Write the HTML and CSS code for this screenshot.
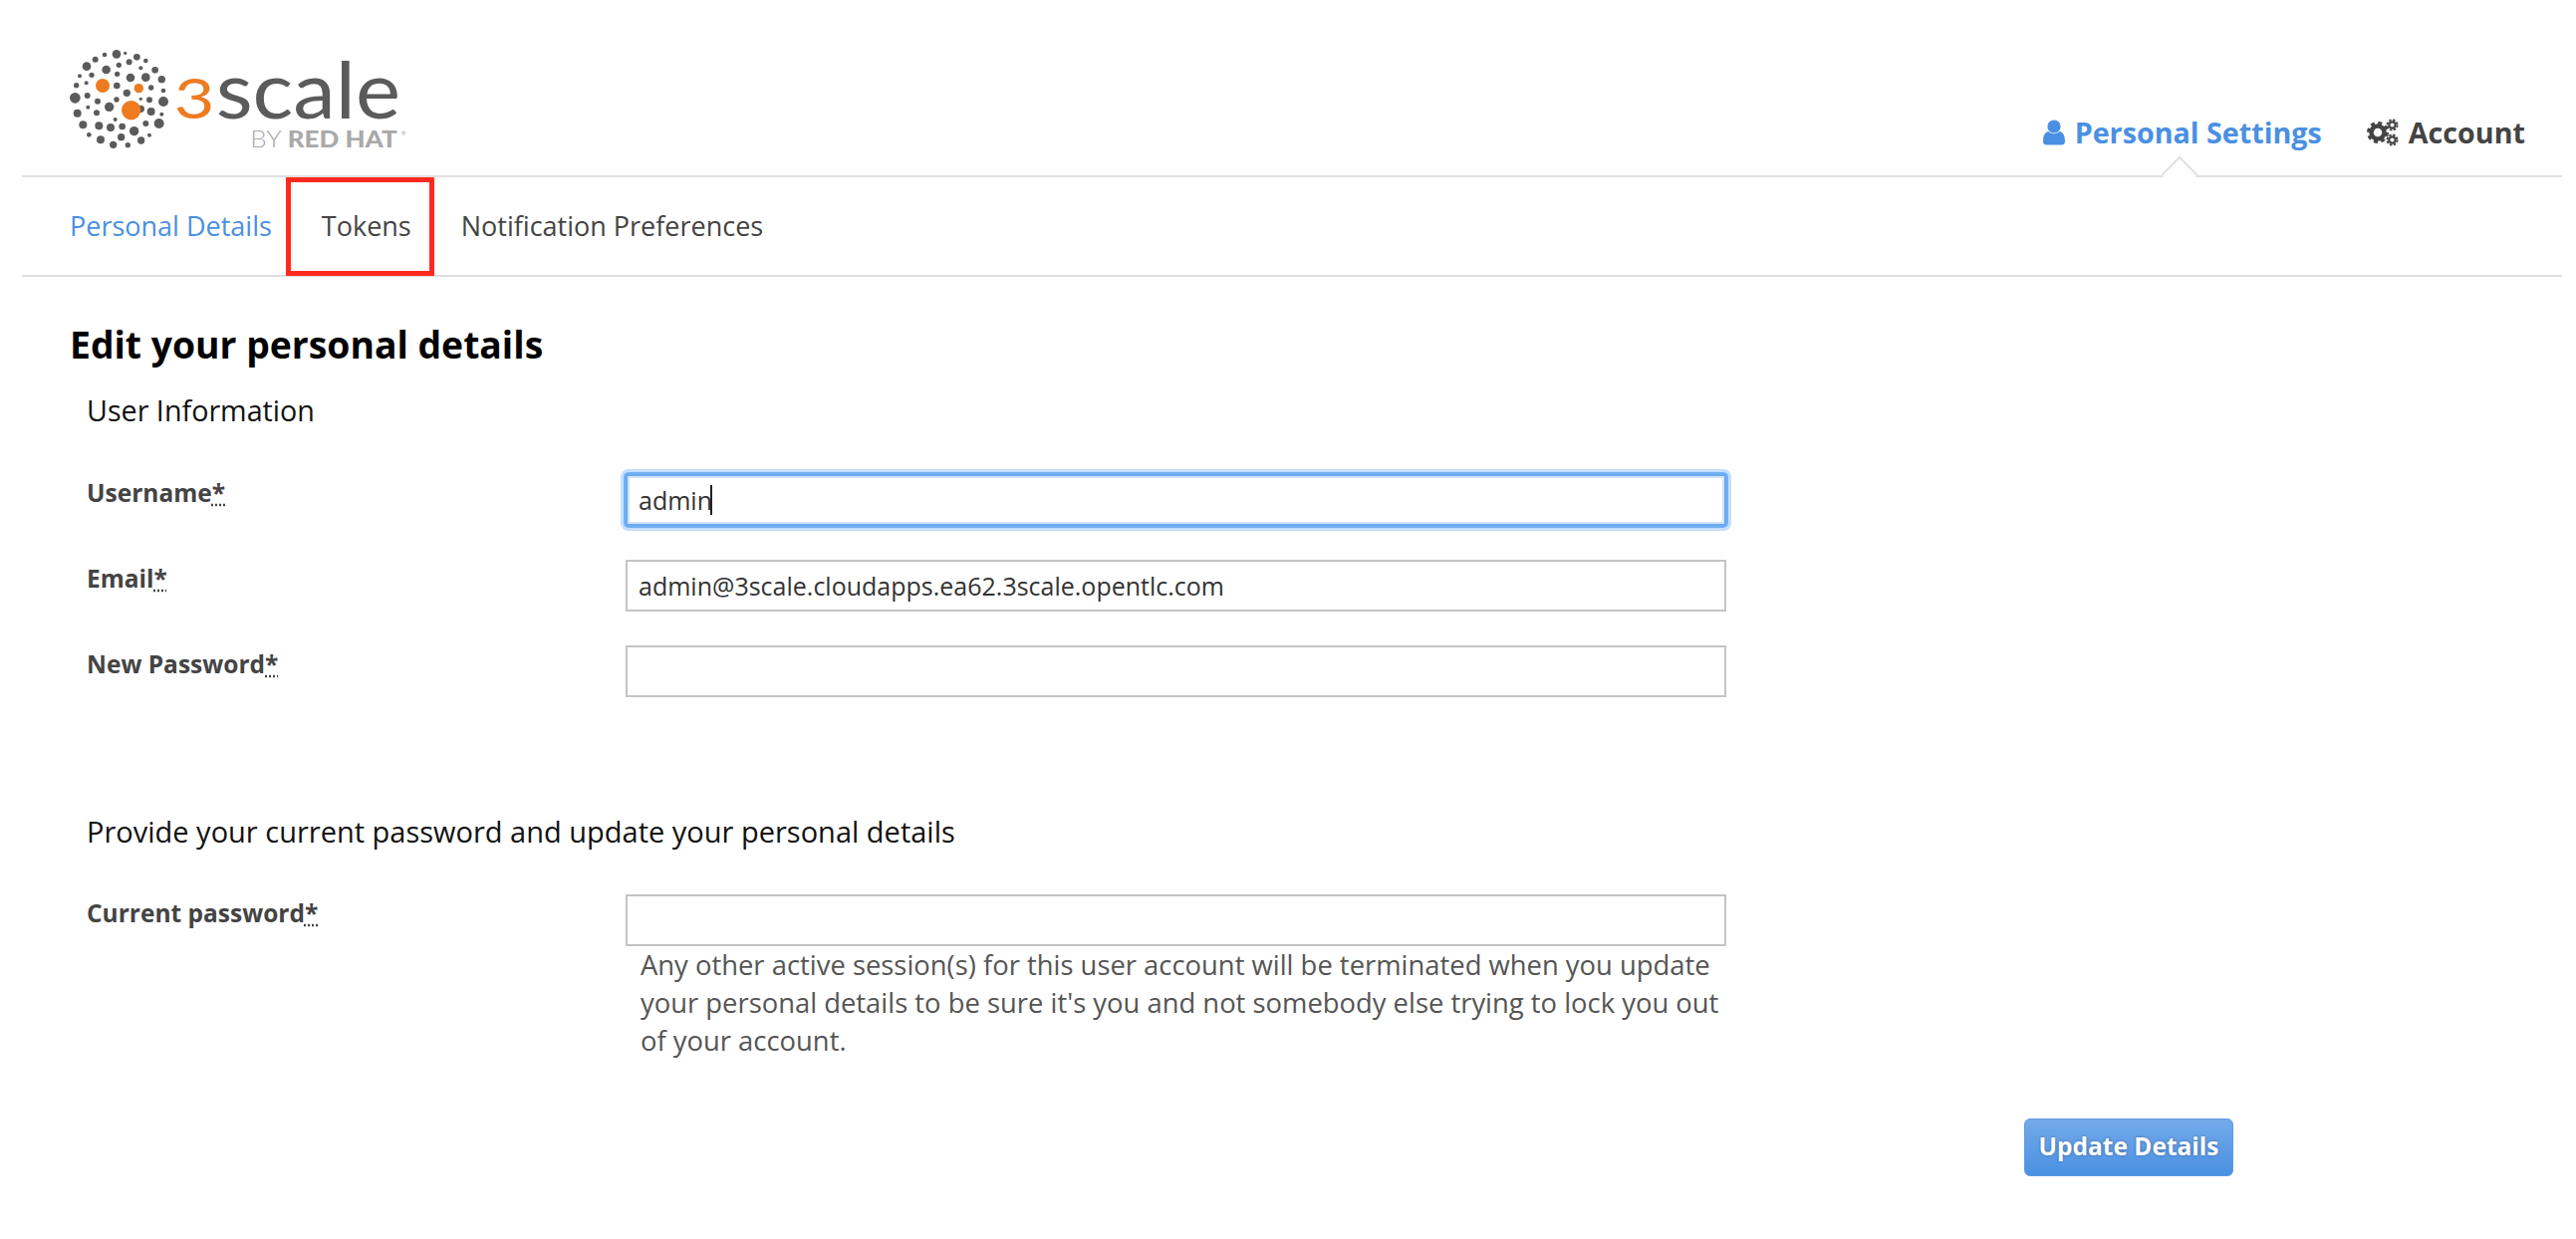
FILE: index.html
```html
<!DOCTYPE html>
<html lang="en">
<head>
    <meta charset="UTF-8">
    <title>Personal Details</title>
    <link rel="stylesheet" href="styles.css">
</head>
<body>
<div class="page">
    <header class="top">
        <a class="logo" href="#">
            <svg width="400" height="140" viewBox="0 0 1200 420">
                <g fill="#5b5b5b">
                    <circle cx="231" cy="73" r="13"/><circle cx="257" cy="70" r="5"/><circle cx="195" cy="75" r="7"/><circle cx="292" cy="82" r="10"/><circle cx="319" cy="93" r="7"/><circle cx="167" cy="89" r="9"/><circle cx="269" cy="97" r="9"/><circle cx="238" cy="106" r="8"/><circle cx="141" cy="110" r="13"/><circle cx="304" cy="115" r="6"/><circle cx="200" cy="120" r="13"/><circle cx="347" cy="121" r="10"/><circle cx="233" cy="133" r="8"/><circle cx="156" cy="136" r="8"/><circle cx="120" cy="139" r="6"/><circle cx="273" cy="144" r="13"/><circle cx="319" cy="143" r="13"/><circle cx="367" cy="149" r="11"/><circle cx="140" cy="160" r="6"/><circle cx="110" cy="167" r="8"/><circle cx="232" cy="168" r="10"/><circle cx="335" cy="174" r="8"/><circle cx="372" cy="183" r="7"/><circle cx="262" cy="190" r="11"/><circle cx="143" cy="198" r="9"/><circle cx="106" cy="205" r="16"/><circle cx="304" cy="208" r="5"/><circle cx="330" cy="211" r="9"/><circle cx="372" cy="216" r="15"/><circle cx="174" cy="215" r="9"/><circle cx="231" cy="210" r="8"/><circle cx="209" cy="232" r="14"/><circle cx="145" cy="233" r="6"/><circle cx="304" cy="238" r="11"/><circle cx="335" cy="246" r="12"/><circle cx="113" cy="251" r="12"/><circle cx="171" cy="250" r="9"/><circle cx="367" cy="254" r="6"/><circle cx="227" cy="270" r="6"/><circle cx="319" cy="282" r="9"/><circle cx="359" cy="282" r="15"/><circle cx="130" cy="286" r="12"/><circle cx="178" cy="289" r="12"/><circle cx="213" cy="294" r="12"/><circle cx="248" cy="291" r="10"/><circle cx="284" cy="305" r="14"/><circle cx="148" cy="316" r="7"/><circle cx="330" cy="317" r="6"/><circle cx="245" cy="323" r="11"/><circle cx="183" cy="331" r="12"/><circle cx="305" cy="333" r="11"/><circle cx="265" cy="347" r="8"/><circle cx="221" cy="346" r="11"/>
                </g>
                <g fill="#ee7b20">
                    <circle cx="189" cy="168" r="21"/><circle cx="298" cy="176" r="14"/><circle cx="275" cy="242" r="29"/>
                </g>
                <text class="logo-three" x="404" y="268" textLength="122" lengthAdjust="spacingAndGlyphs">3</text>
                <text class="logo-name" x="530" y="268" textLength="556" lengthAdjust="spacingAndGlyphs">scale</text>
                <text class="logo-by" x="634" y="355" textLength="442" lengthAdjust="spacingAndGlyphs">BY <tspan class="logo-rh">RED HAT</tspan></text>
                <text class="logo-reg" x="1088" y="318">®</text>
            </svg>
        </a>
        <nav class="main-nav">
            <a class="main-link active" href="#">
                <svg class="icon-user" width="22" height="26" viewBox="0 0 22 26">
                    <circle cx="11" cy="7" r="6.6" fill="#4a90e2"/>
                    <path d="M0 22C0 16 2 12.5 5.500 12C7 13.500 9 14.200 11 14.200C13 14.200 15 13.500 16.500 12C20 12.500 22 16 22 22C22 24.500 20.500 25.500 18.500 25.500H3.500C1.500 25.500 0 24.500 0 22Z" fill="#4a90e2"/>
                </svg>
                Personal Settings
            </a>
            <a class="main-link" href="#">
                <svg class="icon-cogs" width="32" height="28" viewBox="0 0 32 28" fill="none" stroke="#444">
                    <circle cx="11" cy="14" r="6.500" stroke-width="4.500"/>
                    <circle cx="11" cy="14" r="9.500" stroke-width="3" stroke-dasharray="4 3.460"/>
                    <circle cx="25.500" cy="6.500" r="3.200" stroke-width="2.200"/>
                    <circle cx="25.500" cy="6.500" r="5" stroke-width="2" stroke-dasharray="2.400 1.530"/>
                    <circle cx="25.500" cy="21.500" r="3.200" stroke-width="2.200"/>
                    <circle cx="25.500" cy="21.500" r="5" stroke-width="2" stroke-dasharray="2.400 1.530"/>
                </svg>
                Account
            </a>
        </nav>
    </header>

    <nav class="sub-nav">
        <a class="sub-link active" href="#">Personal Details</a>
        <a class="sub-link marked" href="#">Tokens</a>
        <a class="sub-link" href="#">Notification Preferences</a>
    </nav>

    <main class="content">
        <h1>Edit your personal details</h1>
        <form class="details-form">
            <fieldset class="group">
                <legend>User Information</legend>
                <div class="row">
                    <label for="username">Username<abbr title="required">*</abbr></label>
                    <div class="field">
                        <input type="text" id="username" class="focused" value="admin">
                        <span class="caret"></span>
                    </div>
                </div>
                <div class="row">
                    <label for="email">Email<abbr title="required">*</abbr></label>
                    <input type="text" id="email" value="admin@3scale.cloudapps.ea62.3scale.opentlc.com">
                </div>
                <div class="row">
                    <label for="password">New Password<abbr title="required">*</abbr></label>
                    <input type="password" id="password">
                </div>
            </fieldset>
            <fieldset class="group second">
                <legend>Provide your current password and update your personal details</legend>
                <div class="row">
                    <label for="current">Current password<abbr title="required">*</abbr></label>
                    <div>
                        <input type="password" id="current">
                        <p class="hint">Any other active session(s) for this user account will be terminated when you update your personal details to be sure it's you and not somebody else trying to lock you out of your account.</p>
                    </div>
                </div>
            </fieldset>
            <div class="actions">
                <button type="button" class="update-btn">Update Details</button>
            </div>
        </form>
    </main>
</div>
</body>
</html>
```

FILE: styles.css
```css
html, body {
    margin: 0;
    padding: 0;
    background-color: #fff;
}

body {
    font-family: "Open Sans", "DejaVu Sans", sans-serif;
    color: #444;
    font-size: 27px;
}

a {
    text-decoration: none;
    color: inherit;
}

.page {
    margin: 0 14px 0 22px;
}

/* header */
.top {
    display: flex;
    justify-content: space-between;
    align-items: flex-end;
    height: 176px;
    border-bottom: 2px solid #e0e0e0;
    position: relative;
}

.logo {
    display: block;
    margin: 30px 0 6px 18px;
    align-self: flex-start;
    height: 140px;
}

.logo text {
    font-family: "Lato", sans-serif;
}

.logo-three {
    font-size: 166px;
    font-weight: 400;
    fill: #ee7b20;
}

.logo-name {
    font-size: 236px;
    font-weight: 400;
    fill: #5b5b5b;
}

.logo-by {
    font-size: 70px;
    font-weight: 300;
    fill: #a9a9a9;
}

.logo-rh {
    font-weight: 900;
}

.logo-reg {
    font-size: 18px;
    fill: #a9a9a9;
}

.main-nav {
    display: flex;
    gap: 45px;
    padding: 0 37px 25px 0;
}

.main-link {
    display: flex;
    align-items: center;
    gap: 10px;
    font-size: 28.7px;
    font-weight: 700;
    line-height: 36px;
    color: #444;
}

.main-link.active {
    color: #4a90e2;
    position: relative;
}

/* little caret on the line under the active item */
.main-link.active::after {
    content: "";
    position: absolute;
    left: 124px;
    bottom: -37px;
    width: 26px;
    height: 26px;
    background: #fff;
    border-left: 2px solid #e0e0e0;
    border-top: 2px solid #e0e0e0;
    transform: rotate(45deg);
    box-sizing: border-box;
}

/* sub navigation */
.sub-nav {
    display: flex;
    align-items: center;
    height: 98px;
    border-bottom: 2px solid #e0e0e0;
    padding-left: 48px;
    gap: 50px;
}

.sub-link {
    color: #444;
    font-size: 27px;
    line-height: 36px;
    position: relative;
}

.sub-link.active {
    color: #4a90e2;
}

/* red box marked over the tab */
.sub-link.marked::after {
    content: "";
    position: absolute;
    left: -36px;
    right: -23px;
    top: -31px;
    height: 99px;
    border: 5px solid #ff2a1f;
    box-sizing: border-box;
}

/* form */
.content {
    padding: 0 0 0 48px;
}

h1 {
    margin: 0;
    padding-top: 44px;
    font-size: 37.3px;
    line-height: 48px;
    font-weight: 700;
    color: #000;
}

.group {
    border: 0;
    margin: 0;
    padding: 0 0 0 17px;
}

.group legend {
    float: left;
    width: 100%;
    padding: 0;
    margin: 23px 0 45px;
    font-size: 28.7px;
    line-height: 38px;
    color: #111;
}

.group.second {
    margin-top: 82px;
}

.group.second legend {
    margin: 0 0 44px;
    font-size: 29px;
}

.row {
    clear: both;
    display: grid;
    grid-template-columns: 541px 1105px;
    margin-bottom: 34px;
}

.row label {
    font-size: 24.5px;
    font-weight: 700;
    line-height: 34px;
    padding-top: 2px;
}

abbr {
    text-decoration: underline dotted;
}

.field {
    position: relative;
}

input {
    display: block;
    width: 100%;
    height: 52px;
    box-sizing: border-box;
    padding: 0 11px;
    border: 2px solid #c4c4c4;
    border-radius: 0;
    background: #fff;
    font-family: inherit;
    font-size: 25px;
    color: #333;
    outline: none;
}

input.focused {
    border-color: #6aa9ee;
    border-radius: 3px;
    box-shadow: inset 0 0 0 2px #cfe4fb, 0 0 0 2px #72b0f3, 0 0 0 5px #c5e0fd;
}

.caret {
    position: absolute;
    left: 85px;
    top: 11px;
    width: 2px;
    height: 30px;
    background: #222;
}

.hint {
    margin: 0;
    padding: 0 0 0 15px;
    font-size: 27.4px;
    line-height: 38px;
    color: #555;
}

.group.second .row {
    margin-bottom: 0;
}

.actions {
    display: flex;
    justify-content: flex-end;
    padding-top: 59px;
    width: 2172px;
}

.update-btn {
    width: 210px;
    height: 58px;
    border: 1px solid #5b9be6;
    border-radius: 6px;
    background: linear-gradient(#74aaea, #4a90e2);
    color: #fff;
    font-family: inherit;
    font-size: 24.5px;
    font-weight: 700;
    text-shadow: 0 0 3px rgba(0, 0, 0, 0.35);
    padding: 0 0 3px;
}
```
